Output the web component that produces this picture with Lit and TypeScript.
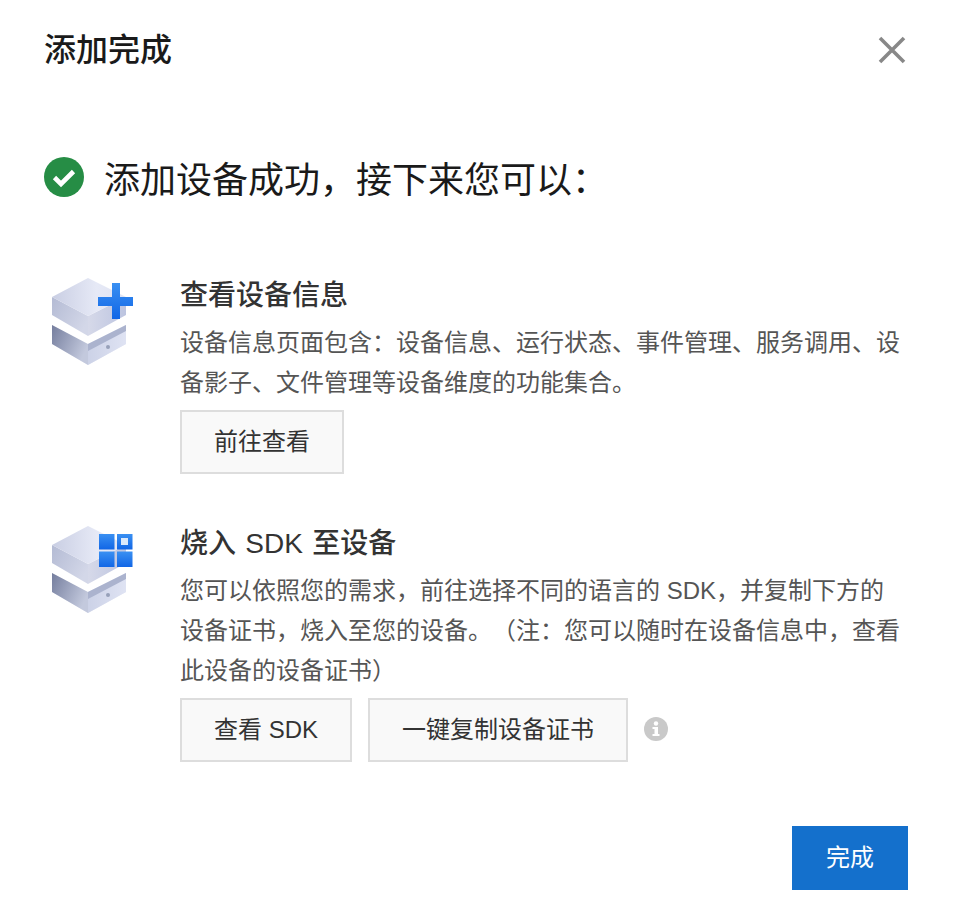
import { LitElement, html, css, svg } from "lit";
import { customElement } from "lit/decorators.js";

const stack = (badge: unknown, id: string) => html`<svg class="stack" viewBox="0 0 90 95" width="90" height="95" aria-hidden="true">
  <defs>
    <linearGradient id="${id}a" x1="0" y1="0.5" x2="1" y2="0.5"><stop offset="0" stop-color="#c9cee3"/><stop offset="0.6" stop-color="#e6e9f6"/><stop offset="1" stop-color="#dfe3f2"/></linearGradient>
    <linearGradient id="${id}b" x1="0" y1="0" x2="1" y2="0.6"><stop offset="0" stop-color="#b4bbd4"/><stop offset="1" stop-color="#d3d7e8"/></linearGradient>
    <linearGradient id="${id}c" x1="0" y1="0" x2="1" y2="0"><stop offset="0" stop-color="#d6d9e9"/><stop offset="1" stop-color="#bcc4e0"/></linearGradient>
    <linearGradient id="${id}d" x1="0" y1="0" x2="1" y2="0.5"><stop offset="0" stop-color="#757e9e"/><stop offset="1" stop-color="#c3c9dd"/></linearGradient>
    <linearGradient id="${id}e" x1="0" y1="0" x2="1" y2="0"><stop offset="0" stop-color="#ccd2e7"/><stop offset="1" stop-color="#dfe3f3"/></linearGradient>
    <linearGradient id="${id}f" x1="0" y1="0" x2="0" y2="1"><stop offset="0" stop-color="#3a90f2"/><stop offset="1" stop-color="#1166e6"/></linearGradient>
  </defs>
  <path d="M2 50 L38 70 L76 50 L76 69 L38 90 L2 69 Z" fill="#eceef6"/>
  <path d="M2 50 L38 69 L38 90 L2 69 Z" fill="url(#${id}d)"/>
  <path d="M38 69 L76 50 L76 69 L38 90 Z" fill="url(#${id}e)"/>
  <path d="M38 69 L76 50 L76 56 L38 76 Z" fill="#abb3ce"/>
  <circle cx="58" cy="72" r="2" fill="#97a0b9"/>
  <path d="M2 22 L38 41 L38 61 L2 40 Z" fill="url(#${id}b)"/>
  <path d="M38 41 L76 22 L76 40 L38 61 Z" fill="url(#${id}c)"/>
  <path d="M38 3 L76 22 L38 41 L2 22 Z" fill="url(#${id}a)"/>
  ${badge}
</svg>`;

const plus = svg`<path d="M62 8 H70 V22 H83 V31 H70 V44 H62 V31 H48 V22 H62 Z" fill="url(#pf)"/>`;
const grid = svg`
  <rect x="49" y="11" width="15.5" height="15.5" fill="url(#gf)"/>
  <rect x="67" y="11" width="15.5" height="15.5" fill="url(#gf)"/>
  <rect x="49" y="28.5" width="15.5" height="15.5" fill="url(#gf)"/>
  <rect x="67" y="28.5" width="15.5" height="15.5" fill="url(#gf)"/>
  <rect x="71" y="15" width="7" height="7" fill="#dbe9fb"/>`;

@customElement("app-root")
export class AppRoot extends LitElement {
  static styles = css`
    :host {
      display: block;
      width: 954px;
      height: 920px;
      background: #fff;
      font-family: "Liberation Sans", "Noto Sans CJK SC", sans-serif;
      color: #333;
      box-sizing: border-box;
      padding: 28px 46px 0 44px;
      text-spacing-trim: space-all;
    }
    .head { display: flex; justify-content: space-between; align-items: center; height: 44px; }
    .title { font-size: 32px; line-height: 44px; font-weight: 500; color: #1a1a1a; }
    .close { display: block; margin-right: 1px; }
    .ok { display: flex; align-items: center; gap: 20px; margin-top: 84px; height: 48px; }
    .ok-icon { display: block; margin-bottom: 6px; }
    .ok-text { font-size: 36px; line-height: 48px; padding-top: 2px; color: #1a1a1a; white-space: nowrap; }
    .sections { display: flex; flex-direction: column; gap: 48px; margin-top: 70px; }
    .row { display: flex; gap: 40px; }
    .stack { display: block; flex: none; margin: 1px 0 0 6px; }
    .body { flex: 1; min-width: 0; }
    .sub { font-size: 28px; line-height: 40px; padding-top: 2px; font-weight: 500; color: #333; word-spacing: 1.5px; }
    .desc { font-size: 24px; line-height: 40px; margin-top: 7px; color: #555; width: 722px; }
    .actions { display: flex; align-items: center; gap: 16px; margin-top: 7px; }
    button {
      font: inherit;
      font-size: 24px;
      height: 64px;
      padding: 0 32px 6px;
      box-sizing: border-box;
      border: 2px solid #ddd;
      background: #f9f9f9;
      color: #333;
      white-space: nowrap;
    }
    .info { display: block; margin-bottom: 2px; }
    .foot { display: flex; justify-content: flex-end; margin-top: 64px; }
    .primary { width: 116px; padding: 0 0 6px; border: 0; background: #1470cc; color: #fff; }
  `;

  render() {
    return html`
      <div class="head">
        <div class="title">添加完成</div>
        <svg class="close" width="30" height="30" viewBox="0 0 30 30" aria-hidden="true">
          <path d="M3 3 L27 27 M27 3 L3 27" stroke="#888" stroke-width="3.6" fill="none"/>
        </svg>
      </div>
      <div class="ok">
        <svg class="ok-icon" width="40" height="40" viewBox="0 0 40 40" aria-hidden="true">
          <circle cx="20" cy="20" r="20" fill="#268d45"/>
          <path d="M10.5 20.5 L17 27 L29.5 14.5" fill="none" stroke="#fff" stroke-width="4.6"/>
        </svg>
        <div class="ok-text">添加设备成功，接下来您可以：</div>
      </div>
      <div class="sections">
        <div class="row">
          ${stack(plus, "p")}
          <div class="body">
            <div class="sub">查看设备信息</div>
            <div class="desc">设备信息页面包含：设备信息、运行状态、事件管理、服务调用、设备影子、文件管理等设备维度的功能集合。</div>
            <div class="actions"><button>前往查看</button></div>
          </div>
        </div>
        <div class="row">
          ${stack(grid, "g")}
          <div class="body">
            <div class="sub">烧入 SDK 至设备</div>
            <div class="desc">您可以依照您的需求，前往选择不同的语言的 SDK，并复制下方的设备证书，烧入至您的设备。（注：您可以随时在设备信息中，查看此设备的设备证书）</div>
            <div class="actions">
              <button>查看 SDK</button>
              <button>一键复制设备证书</button>
              <svg class="info" width="24" height="24" viewBox="0 0 24 24" aria-hidden="true">
                <circle cx="12" cy="12" r="12" fill="#c9c9c9"/>
                <circle cx="12" cy="6.5" r="2.2" fill="#fff"/>
                <path d="M8.5 10 H14 V17 H15.5 V19 H8.5 V17 H10.5 V12 H8.5 Z" fill="#fff"/>
              </svg>
            </div>
          </div>
        </div>
      </div>
      <div class="foot"><button class="primary">完成</button></div>
    `;
  }
}
